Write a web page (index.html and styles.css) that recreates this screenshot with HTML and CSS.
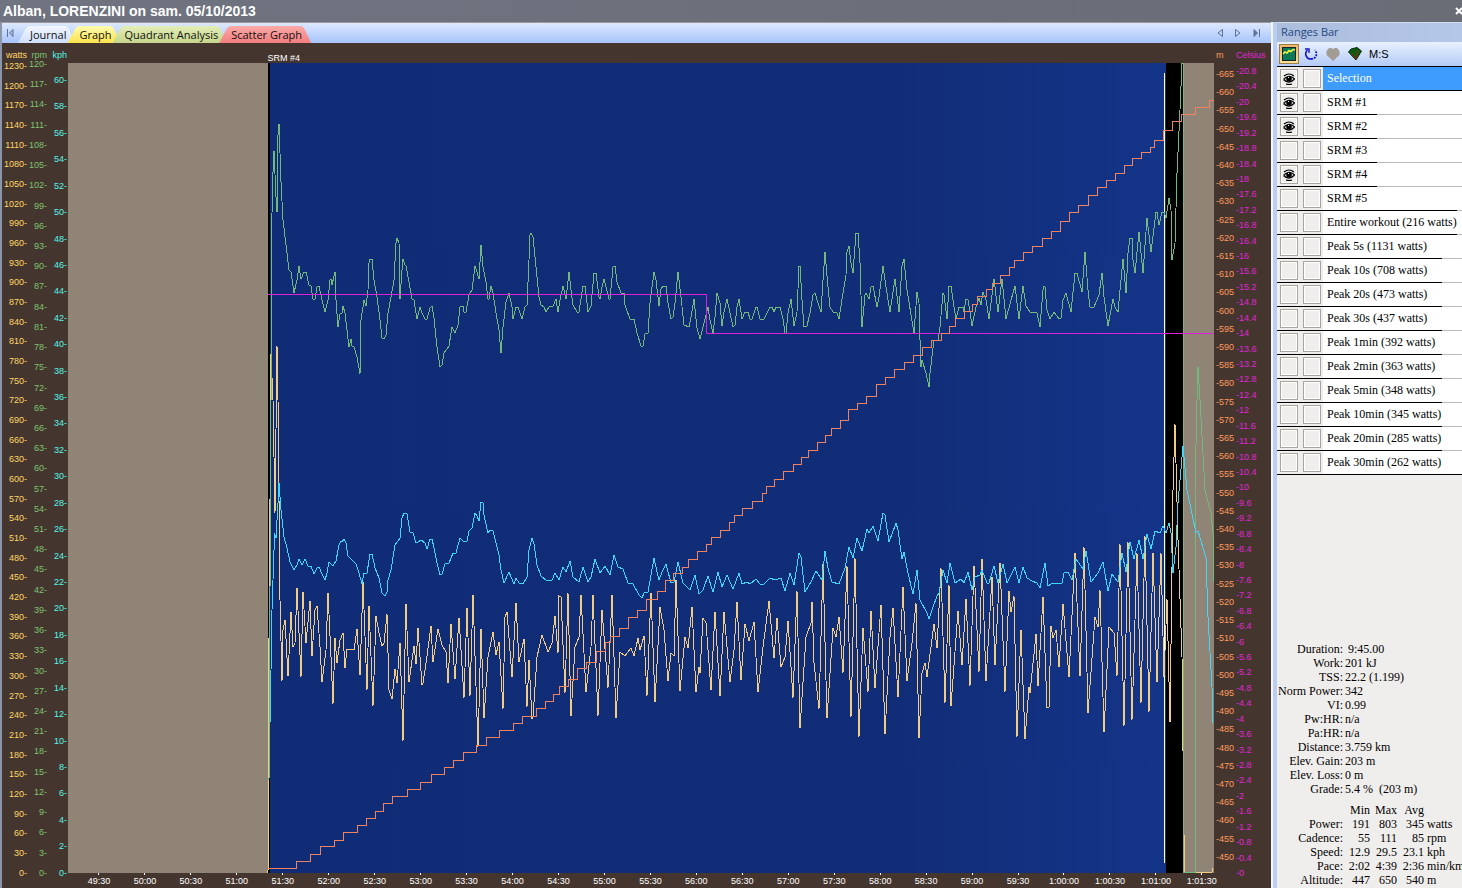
FILE: index.html
```html
<!DOCTYPE html>
<html lang="en">
<head>
    <meta charset="UTF-8">
    <title>Workout Graph</title>
    <link rel="stylesheet" href="styles.css">
</head>
<body>
    <!-- Title Bar -->
    <header class="titlebar">
        <h1>Alban, LORENZINI on sam. 05/10/2013</h1>
        <button class="close" aria-label="Close">
            <svg width="7" height="8" viewBox="0 0 7 8"><path d="M1 1L7 7M7 1L1 7" stroke="#fff" stroke-width="2"/></svg>
        </button>
    </header>
    <div class="workspace">
        <main class="main">
            <!-- Tabs -->
            <nav class="tabs">
                <button class="arrow" aria-label="First tab">
                    <svg width="8" height="8" viewBox="0 0 8 8"><path d="M1.5 0V8M7 0.5V7.5L3.5 4Z" fill="#a9b9d8" stroke="#5c7299"/></svg>
                </button>
                <button class="tab journal">Journal</button>
                <button class="tab graph">Graph</button>
                <button class="tab quadrant">Quadrant Analysis</button>
                <button class="tab scatter">Scatter Graph</button>
                <div class="tab-arrows">
                    <button class="arrow" aria-label="Previous tab">
                        <svg width="6" height="8" viewBox="0 0 6 8"><path d="M5.5 0.5V7.5L1 4Z" fill="none" stroke="#5c7299"/></svg>
                    </button>
                    <button class="arrow" aria-label="Next tab">
                        <svg width="6" height="8" viewBox="0 0 6 8"><path d="M0.5 0.5V7.5L5 4Z" fill="none" stroke="#5c7299"/></svg>
                    </button>
                    <button class="arrow" aria-label="Last tab">
                        <svg width="8" height="8" viewBox="0 0 8 8"><path d="M6.5 0V8M1 0.5V7.5L4.5 4Z" fill="#5c7299" stroke="#5c7299"/></svg>
                    </button>
                </div>
            </nav>
            <!-- Graph -->
            <section class="chart">
                <div class="units left">
                    <span class="watts">watts</span>
                    <span class="rpm">rpm</span>
                    <span class="kph">kph</span>
                </div>
                <div class="range-name">SRM #4</div>
                <div class="units right">
                    <span class="meters">m</span>
                    <span class="celsius">Celsius</span>
                </div>
                <div class="axes left">
                    <div class="axis watts" id="wattsAxis"></div>
                    <div class="axis rpm" id="rpmAxis"></div>
                    <div class="axis kph" id="kphAxis"></div>
                </div>
                <svg class="plot" viewBox="68 63 1146 810" preserveAspectRatio="none">
                    <defs>
                        <linearGradient id="selected">
                            <stop offset="0" stop-color="#112c77"/>
                            <stop offset="0.7" stop-color="#112d78"/>
                            <stop offset="1" stop-color="#143488"/>
                        </linearGradient>
                    </defs>
                    <rect x="68" y="63" width="1146" height="810" fill="#908477"/>
                    <rect x="268" y="63" width="916" height="810" fill="#000"/>
                    <rect x="270" y="63" width="896" height="810" fill="url(#selected)"/>
                    <rect x="1164" y="73" width="1" height="790" fill="#fff"/>
                    <!-- Power -->
                    <polyline class="line power" points="268,873 269,640 270,500 271,354 273,400 275,513 277,346 278,400 280,600 282,681 283,630 285,620 288,676 291,612 293,647 295,643 297,588 301,677 303,592 306,643 310,601 312,656 315,610 317,606 320,647 322,682 326,650 328,593 331,657 333,704 335,638 337,663 340,640 343,633 345,668 347,649 354,650 357,629 360,675 363,582 367,690 369,606 373,706 376,616 379,633 382,646 384,643 387,614 389,690 392,699 395,669 397,683 400,643 403,741 406,604 409,682 414,646 416,664 418,628 422,685 423,683 426,663 431,626 433,662 438,629 442,645 446,652 448,683 451,624 455,679 459,618 464,698 467,608 470,696 473,595 478,747 481,629 484,718 488,657 493,632 496,655 499,642 503,709 505,617 507,612 512,677 516,603 519,662 524,639 527,707 529,660 532,719 533,717 537,657 542,635 548,652 552,643 555,616 558,653 559,596 561,597 565,693 568,593 571,716 575,647 579,637 581,595 586,692 591,647 593,595 598,716 602,610 608,688 612,595 616,718 620,652 625,656 631,648 634,656 638,638 640,650 644,636 647,696 651,593 655,702 660,607 664,630 668,681 671,653 674,656 676,580 680,691 685,637 688,648 692,607 696,692 699,667 700,673 703,618 706,623 711,690 715,612 720,696 724,612 730,682 734,650 737,602 741,680 745,624 749,641 754,622 758,692 763,647 769,601 774,658 777,618 781,667 785,657 788,621 793,698 797,591 800,728 806,637 811,623 812,602 814,663 819,709 823,564 827,718 833,628 836,637 839,617 843,673 847,566 851,717 855,558 859,737 863,628 868,692 871,611 875,688 881,605 885,734 890,637 893,608 898,697 903,587 907,681 912,643 916,603 919,738 922,673 925,663 927,677 934,624 937,648 941,568 945,703 949,585 951,706 958,611 962,665 966,599 970,686 974,566 979,672 982,559 986,681 992,577 995,665 1000,563 1005,692 1009,591 1011,612 1014,596 1017,737 1021,630 1025,739 1029,687 1030,693 1036,634 1038,686 1043,597 1047,708 1049,707 1051,626 1053,638 1056,630 1059,667 1063,604 1069,677 1075,553 1080,676 1084,547 1088,713 1095,617 1098,627 1100,590 1104,732 1109,627 1114,633 1117,676 1120,544 1124,726 1128,542 1132,720 1137,553 1141,703 1145,536 1149,712 1153,553 1157,682 1161,553 1164,677 1167,599 1170,722 1173,490 1175,424 1178,540 1182,657 1183,751 1184,835 1184,872 1212,872 1213,868"/>
                    <!-- Cadence -->
                    <polyline class="line cadence" points="269,780 271,400 271,263 272,213 273,172 274,151 276,197 277,212 277,147 279,124 281,182 283,220 289,270 291,272 294,293 297,280 299,266 301,279 304,272 306,272 309,285 311,286 313,299 315,299 317,287 319,286 322,300 325,312 328,300 330,280 331,279 332,285 335,272 336,300 338,327 340,314 342,313 343,306 345,313 347,330 349,347 351,339 352,346 354,347 357,357 360,374 361,320 364,300 366,306 368,290 369,263 370,259 372,259 374,280 377,297 380,320 382,338 384,339 386,335 388,313 391,297 394,280 396,243 397,238 399,243 400,299 402,270 403,259 405,265 406,266 409,282 412,299 414,300 416,313 417,319 420,307 422,313 425,319 427,319 430,308 432,306 434,318 437,347 440,367 442,365 444,353 449,346 452,327 455,333 458,325 460,307 463,306 464,312 466,312 469,295 472,290 475,266 477,272 479,279 481,245 483,267 486,282 488,299 489,299 491,286 493,293 496,313 499,330 501,353 503,327 506,302 509,293 512,307 513,319 516,307 518,307 522,319 525,307 527,305 529,260 530,235 531,233 533,237 536,267 539,297 541,305 544,307 546,312 549,307 553,306 556,299 558,312 560,300 563,286 566,299 569,272 571,290 573,305 577,312 579,312 583,286 585,286 588,312 591,306 594,273 596,273 599,297 600,299 602,287 604,279 609,299 610,299 613,267 615,266 617,282 621,293 624,293 625,305 630,319 634,319 637,333 641,346 643,346 645,334 648,333 650,303 654,272 656,280 659,306 661,289 663,286 666,286 668,303 671,319 673,317 675,303 678,272 681,297 684,325 689,327 691,317 694,299 697,328 700,339 703,327 708,307 710,320 713,333 715,317 717,293 720,303 722,326 724,312 727,299 730,313 733,327 735,325 737,307 739,299 742,319 745,312 748,312 750,319 752,319 756,307 757,307 760,319 764,319 770,307 772,307 774,312 776,307 780,307 783,319 785,333 786,333 788,313 791,299 794,326 797,312 799,266 800,266 802,300 804,327 807,326 810,313 813,295 815,293 818,303 821,312 823,280 825,252 828,287 830,307 833,312 837,313 839,319 842,299 846,275 847,252 849,246 851,263 853,273 856,233 858,233 860,263 862,327 865,295 866,293 869,299 871,287 873,286 877,307 879,297 883,266 886,287 890,312 895,279 899,312 902,266 904,259 907,290 914,333 917,292 919,303 920,340 921,367 922,360 926,373 929,387 930,373 934,340 938,340 940,327 943,293 944,295 947,319 949,286 951,286 954,307 956,319 959,307 963,307 964,312 966,299 968,300 970,312 972,326 976,307 979,298 981,305 983,292 986,300 989,319 994,279 998,312 1002,279 1006,319 1011,300 1015,286 1019,319 1023,286 1026,306 1030,312 1037,313 1040,327 1043,290 1044,286 1045,287 1047,310 1050,319 1054,312 1059,319 1061,318 1063,300 1066,293 1071,312 1075,273 1077,273 1082,292 1085,252 1088,290 1090,307 1094,307 1099,295 1102,273 1104,297 1108,326 1113,299 1115,307 1118,312 1120,290 1123,259 1126,293 1128,253 1130,238 1132,238 1133,260 1135,273 1139,232 1143,273 1147,218 1151,252 1156,212 1157,212 1159,225 1162,212 1164,212 1166,218 1169,198 1171,210 1172,260 1175,243 1177,173 1180,110 1182,63 1183,63 1183,872 1195,872 1195,490 1197,400 1198,367 1200,400 1205,490 1208,502 1211,513 1213,533 1213,582"/>
                    <!-- Speed -->
                    <polyline class="line speed" points="270,723 271,670 272,610 274,550 274,533 276,538 278,503 279,483 281,510 284,537 287,548 290,562 294,570 297,565 299,559 302,565 305,559 308,566 311,566 314,574 317,568 319,567 322,574 325,580 327,573 329,562 333,566 336,561 339,545 341,541 342,542 344,539 346,543 348,556 352,560 356,564 359,573 362,584 364,573 367,573 370,554 372,554 375,568 379,578 382,593 385,596 387,592 388,580 391,570 395,545 400,538 402,518 404,513 407,514 410,532 413,533 416,543 418,542 421,540 425,543 427,549 430,539 432,539 434,548 437,563 440,575 442,574 445,564 449,563 453,553 456,553 460,538 464,542 467,541 469,531 472,528 475,513 477,516 479,521 481,502 483,503 484,515 488,533 490,530 493,531 495,539 499,555 501,570 504,583 509,572 514,584 516,578 519,583 523,584 527,577 529,550 532,538 534,544 537,565 541,576 547,581 552,580 555,573 559,580 563,567 566,572 570,561 573,577 579,582 583,567 588,582 591,577 595,559 600,573 605,566 610,575 614,555 618,567 623,569 628,583 633,584 639,595 642,598 644,593 648,592 654,558 657,572 659,580 662,572 666,564 671,583 674,582 678,562 683,583 690,590 695,575 699,594 703,590 708,576 713,592 718,572 722,587 727,575 733,589 739,573 742,584 747,582 750,584 756,579 760,584 764,584 770,578 775,580 781,578 785,591 790,573 794,585 799,553 801,557 805,592 811,582 816,571 822,580 825,551 828,568 832,582 839,584 845,568 849,547 853,558 857,538 862,551 867,529 869,533 873,526 878,541 883,513 885,515 889,542 896,523 898,530 902,559 904,552 908,573 913,594 917,570 920,600 927,613 929,619 933,607 937,596 939,593 943,570 947,583 950,563 955,583 961,579 964,583 968,572 972,590 975,577 980,575 982,570 987,583 989,583 994,566 998,583 1003,564 1007,583 1015,567 1019,583 1023,567 1027,578 1032,581 1037,583 1040,588 1045,563 1048,586 1053,583 1062,583 1064,573 1068,572 1072,580 1076,559 1083,569 1086,551 1091,582 1098,573 1103,562 1108,591 1112,574 1118,582 1122,553 1126,572 1130,542 1134,559 1139,540 1143,559 1147,534 1151,549 1155,531 1160,533 1163,526 1166,533 1169,523 1171,533 1173,573 1176,547 1178,503 1183,446 1187,490 1196,533 1198,531 1206,558 1208,617 1212,687 1213,723"/>
                    <!-- Temperature -->
                    <path class="temperature" d="M268 294.5H706.5V333.5H1214"/>
                    <!-- Altitude -->
                    <path class="line altitude" d="M268 868H296V861H310V854H320V846H334V840H343V832H357V825H366V818H375V811H383V803H392V796H407V789H420V782H431V774H444V767H453V760H463V752H476V745H486V737H499V730H513V723H522V716H536V708H545V701H553V694H559V686H568V679H577V668H586V662H596V651H605V642H610V636H619V628H628V617H637V610H646V599H657V591H665V580H673V573H682V567H688V559H697V551H706V544H711V537H720V530H729V522H734V515H742V508H752V501H762V493H766V486H774V479H783V471H793V464H801V457H808V450H817V442H825V435H831V428H840V420H848V409H857V403H866V396H876V384H885V377H894V369H904V362H913V355H922V347H931V340H941V333H949V326H955V318H964V311H972V304H977V296H986V289H992V283H1000V275H1009V267H1014V260H1023V252H1032V246H1042V238H1051V231H1060V221H1069V212H1078V205H1088V195H1097V187H1106V180H1115V173H1124V165H1132V158H1141V152H1150V147H1154V140H1163V130H1172V121H1181V114H1195V107H1209V100H1214"/>
                </svg>
                <div class="axes right">
                    <div class="axis meters" id="metersAxis"></div>
                    <div class="axis celsius" id="celsiusAxis"></div>
                </div>
                <div class="time-axis" id="timeAxis"></div>
            </section>
        </main>
        <!-- Ranges Bar -->
        <aside class="ranges">
            <h2>Ranges Bar</h2>
            <div class="toolbar">
                <button class="tool active" aria-label="Graph">
                    <svg width="14" height="14" viewBox="0 0 14 14"><rect x="0.5" y="0.5" width="13" height="13" fill="#0b7a55" stroke="#123"/><path d="M1 7L3 5L5 6L7 3.5L9 4.5L11 2.5L13 3" fill="none" stroke="#f4f43a" stroke-width="1.5"/></svg>
                </button>
                <button class="tool" aria-label="Refresh">
                    <svg width="14" height="14" viewBox="0 0 14 14" fill="none" stroke="#1616c8"><path d="M3.5 3C0 6 2 12 7 12" stroke-width="1.6"/><path d="M7 12C12 12 14 7 11 3" stroke-width="1.8" stroke-dasharray="2 1"/><path d="M1 2H5V6" stroke-width="1.4"/></svg>
                </button>
                <button class="tool" aria-label="Heart rate">
                    <svg width="14" height="14" viewBox="0 0 14 14"><path d="M3 1H5L7 2L9 1H11L13.5 4V8L7 14L0.5 8V4Z" fill="#a39c95"/></svg>
                </button>
                <button class="tool" aria-label="Peaks">
                    <svg width="14" height="14" viewBox="0 0 14 14"><path d="M3 2L9 0.5L13.5 4L8 13L0.5 5Z" fill="#0b5c12" stroke="#092c09"/><path d="M10 3L8 12L4 6" fill="none" stroke="#8b2810"/></svg>
                </button>
                <button class="tool time">M:S</button>
            </div>
            <ul class="range-list" id="rangeList"></ul>
            <!-- Selection Statistics -->
            <div class="stats">
                <table class="summary">
                    <tr><th>Duration:</th><td>&nbsp;9:45.00</td></tr>
                    <tr><th>Work:</th><td>201 kJ</td></tr>
                    <tr><th>TSS:</th><td>22.2 (1.199)</td></tr>
                    <tr><th>Norm Power:</th><td>342</td></tr>
                    <tr><th>VI:</th><td>0.99</td></tr>
                    <tr><th>Pw:HR:</th><td>n/a</td></tr>
                    <tr><th>Pa:HR:</th><td>n/a</td></tr>
                    <tr><th>Distance:</th><td>3.759 km</td></tr>
                    <tr><th>Elev. Gain:</th><td>203 m</td></tr>
                    <tr><th>Elev. Loss:</th><td>0 m</td></tr>
                    <tr><th>Grade:</th><td>5.4 %&nbsp; (203 m)</td></tr>
                </table>
                <table class="averages">
                    <tr><th></th><th>Min</th><th>Max</th><th>Avg</th><td></td></tr>
                    <tr><th>Power:</th><td>191</td><td>803</td><td>345</td><td>watts</td></tr>
                    <tr><th>Cadence:</th><td>55</td><td>111</td><td>85</td><td>rpm</td></tr>
                    <tr><th>Speed:</th><td>12.9</td><td>29.5</td><td>23.1</td><td>kph</td></tr>
                    <tr><th>Pace:</th><td>2:02</td><td>4:39</td><td>2:36</td><td>min/km</td></tr>
                    <tr><th>Altitude:</th><td>447</td><td>650</td><td>540</td><td>m</td></tr>
                </table>
            </div>
        </aside>
    </div>
    <script src="script.js"></script>
</body>
</html>
```
FILE: styles.css
```css
* {
    box-sizing: border-box;
}
body {
    margin: 0;
    height: 100vh;
    display: flex;
    flex-direction: column;
    overflow: hidden;
    font-family: "Liberation Sans", Arial, sans-serif;
}
button {
    border: 0;
    padding: 0;
    background: none;
    font: inherit;
    color: inherit;
}
svg {
    display: block;
}

/* Title bar */
.titlebar {
    display: flex;
    justify-content: space-between;
    align-items: center;
    height: 22px;
    padding-left: 3px;
    background: linear-gradient(to right, #6f7480, #6a6c76);
    color: #fff;
}
.titlebar h1 {
    margin: 0;
    font-size: 14px;
    line-height: 20px;
}
.workspace {
    flex: 1;
    display: flex;
    min-height: 0;
}
.main {
    flex: 1;
    min-width: 0;
    display: flex;
    flex-direction: column;
    border-left: 2px solid #8b96ab;
}

/* Tabs */
.tabs {
    display: flex;
    align-items: flex-end;
    height: 21px;
    padding-left: 4px;
    border-top: 1px solid #9c9a9c;
    background: linear-gradient(#dce8ff, #a8c4fb);
    font-family: "Open Sans", "Noto Sans", sans-serif;
    font-size: 11px;
}
.tab {
    height: 17px;
    line-height: 16px;
    padding: 0 9px 0 12px;
    margin-left: -8px;
    clip-path: polygon(0 100%, 8px 2px, 11px 0, calc(100% - 10px) 0, calc(100% - 7px) 2px, 100% 100%);
    color: #111;
}
.journal {
    margin-left: 4px;
    background: linear-gradient(#f2f7ff, #cfdffc);
}
.graph {
    background: linear-gradient(#fffbb0, #fbe24c);
}
.quadrant {
    background: linear-gradient(#e3eeb6, #c6d68c);
}
.scatter {
    background: linear-gradient(#fbaaa8, #f27f7f);
}
.arrow {
    align-self: center;
}
.tab-arrows {
    display: flex;
    gap: 12px;
    margin-left: auto;
    align-self: center;
    padding-right: 10px;
}

/* Graph */
.chart {
    flex: 1;
    min-height: 0;
    display: grid;
    grid-template-columns: 66px 1fr 57px;
    grid-template-rows: 20px 1fr 15px;
    background: #44362e;
    font-size: 9px;
    line-height: 10px;
}
.units, .axes {
    display: grid;
}
.left {
    grid-template-columns: 25px 20px 20px;
    text-align: right;
}
.right {
    grid-template-columns: 20px 1fr;
    padding-left: 2px;
}
.units {
    padding-top: 7px;
}
.units span {
    white-space: nowrap;
}
.axis {
    display: flex;
    flex-direction: column;
    justify-content: space-between;
}
.axes .watts {
    margin: -2px 0 -5px;
}
.axes .rpm {
    margin: -4px 0 -5px;
}
.axes .kph {
    margin: 12px 0 -5px;
}
.axes .meters {
    margin: 6px 0 11px;
}
.axes .celsius {
    margin: 3px 0 -5px;
}
.watts { color: #ffd566; }
.rpm { color: #7fc270; }
.kph { color: #55f5ea; }
.meters { color: #ff9a5e; }
.celsius { color: #e024d8; }
.range-name {
    padding-top: 10px;
    margin-left: 17.4%;
    color: #fff;
}
.plot {
    width: 100%;
    height: 100%;
    min-height: 0;
}
.line {
    fill: none;
    stroke-width: 1px;
    vector-effect: non-scaling-stroke;
    shape-rendering: crispEdges;
}
.power { stroke: #f0cd80; }
.cadence { stroke: #74b97c; }
.speed { stroke: #3fd8f8; }
.temperature { fill: none; stroke: #dc22dc; }
.altitude { stroke: #f0825f; }
.time-axis {
    grid-column: 2;
    display: flex;
    margin: 0 -11px 0 8px;
    color: #fff;
}
.time-axis span {
    flex: 1 1 0;
    min-width: 0;
    padding-top: 3px;
    text-align: center;
    background: linear-gradient(#fff, #fff) center top / 1px 2px no-repeat;
}

/* Ranges bar */
.ranges {
    flex: 0 0 191px;
    display: flex;
    flex-direction: column;
    overflow: hidden;
    border-left: 2px solid #f4f6fa;
    box-shadow: inset 4px 0 #bccdf2;
    padding-left: 4px;
    background: #f0eeec;
    font-family: "Liberation Serif", "Times New Roman", serif;
    font-size: 12px;
}
.ranges h2 {
    margin: 0;
    height: 20px;
    padding-left: 4px;
    border-top: 1px solid #d5dcea;
    background: linear-gradient(to right, #acbddd, #b5c7e9);
    color: #27497f;
    font: 11px/18px "Open Sans", "Noto Sans", sans-serif;
}
.toolbar {
    display: flex;
    align-items: center;
    gap: 2px;
    height: 24px;
    padding-left: 2px;
    background: linear-gradient(#e9f1ff, #b4cbf7);
}
.tool {
    display: flex;
    align-items: center;
    justify-content: center;
    width: 20px;
    height: 20px;
    font-family: "Liberation Sans", Arial, sans-serif;
    font-size: 11px;
}
.tool.active {
    border: 1px solid #9b7c4b;
    background: linear-gradient(#f3b562, #fcdf92);
}
.tool.time {
    width: auto;
    padding-left: 2px;
}
.range-list {
    list-style: none;
    margin: 0;
    padding: 0;
    border-top: 1px solid #000;
}
/* separator: black part over a grey line */
.range-list li {
    display: flex;
    height: 24px;
    padding-bottom: 1px;
    background: linear-gradient(#000, #000) left bottom / 100px 1px no-repeat,
        linear-gradient(#bdbab6, #bdbab6) left bottom / 100% 1px no-repeat;
}
.range-list .wide {
    background-size: 165px 1px, 100% 1px;
}
.range-list .wider {
    background-size: 180px 1px, 100% 1px;
}
.range-list .full {
    background-size: 100% 1px;
}
.box {
    display: flex;
    align-items: center;
    justify-content: center;
    width: 18px;
    height: 19px;
    margin: 2px 2px 0 3px;
    border: 1px solid #a8a49f;
    box-shadow: inset -1px -1px #fff, inset 1px 1px #fff;
    background: #f0eeec;
}
.range-list label {
    flex: 1;
    padding-left: 4px;
    background: #fff;
    line-height: 22px;
    white-space: nowrap;
}
.range-list .selected label {
    background: #3e9bff;
    color: #fff;
}

/* Statistics */
.stats {
    margin-top: auto;
    padding-bottom: 1px;
    line-height: 14px;
}
.stats table {
    border-collapse: collapse;
    table-layout: fixed;
    width: 185px;
}
.stats th, .stats td {
    padding: 0;
    height: 14px;
    font-weight: normal;
    white-space: nowrap;
}
.stats th {
    text-align: right;
}
.stats th:first-child {
    width: 66px;
}
.summary td {
    padding-left: 2px;
}
.averages {
    margin-top: 7px;
}
.averages th, .averages td {
    width: 27px;
    text-align: right;
}
.averages td:last-child {
    width: auto;
    padding-left: 3px;
    text-align: left;
}
```
FILE: script.js
```js
const eye = '<svg width="12" height="12" viewBox="0 0 12 12"><path d="M1 3Q6 -1 11 3M0.5 6.5Q6 0.5 11.5 6Q6 12 0.5 6.5M3 11Q6 12 9 11" fill="none" stroke="#000" stroke-width="1.2"/><circle cx="6" cy="6" r="2.8"/><rect x="5" y="4" width="1" height="1" fill="#fff"/></svg>';

const ranges = [
    { name: "Selection", visible: true, line: "full selected" },
    { name: "SRM #1", visible: true },
    { name: "SRM #2", visible: true },
    { name: "SRM #3" },
    { name: "SRM #4", visible: true },
    { name: "SRM #5", line: "wider" },
    { name: "Entire workout (216 watts)", line: "wider" },
    { name: "Peak 5s (1131 watts)", line: "wide" },
    { name: "Peak 10s (708 watts)", line: "wide" },
    { name: "Peak 20s (473 watts)", line: "wide" },
    { name: "Peak 30s (437 watts)", line: "wide" },
    { name: "Peak 1min (392 watts)", line: "wide" },
    { name: "Peak 2min (363 watts)", line: "wide" },
    { name: "Peak 5min (348 watts)", line: "wide" },
    { name: "Peak 10min (345 watts)", line: "wide" },
    { name: "Peak 20min (285 watts)", line: "wide" },
    { name: "Peak 30min (262 watts)", line: "full" }
];

function fillAxis(id, top, bottom, step, format) {
    const axis = document.getElementById(id);
    const count = Math.round((top - bottom) / step);
    for (let i = 0; i <= count; i++) {
        const label = document.createElement("span");
        // one decimal at most, without trailing zeros
        label.textContent = format(Math.round((top - i * step) * 10) / 10);
        axis.appendChild(label);
    }
}

function formatTime(seconds) {
    const h = Math.floor(seconds / 3600);
    const m = Math.floor(seconds % 3600 / 60);
    const s = String(seconds % 60).padStart(2, "0");
    return h ? h + ":" + String(m).padStart(2, "0") + ":" + s : m + ":" + s;
}

function fillRanges() {
    const list = document.getElementById("rangeList");
    ranges.forEach(function(range, i) {
        const row = document.createElement("li");
        row.className = range.line || "";
        row.innerHTML = '<button class="box" id="show' + i + '">' + (range.visible ? eye : "") + '</button>' +
            '<button class="box" aria-label="Shade range"></button>' +
            '<label for="show' + i + '">' + range.name + '</label>';
        list.appendChild(row);
    });
}

fillAxis("wattsAxis", 1230, 0, 30, v => v + "-");
fillAxis("rpmAxis", 120, 0, 3, v => v + "-");
fillAxis("kphAxis", 60, 0, 2, v => v + "-");
fillAxis("metersAxis", 665, 450, 5, v => "-" + v);
fillAxis("celsiusAxis", 20.8, 0, 0.4, v => "-" + v);

const timeAxis = document.getElementById("timeAxis");
for (let t = 49 * 60 + 30; t <= 3690; t += 30) {
    const label = document.createElement("span");
    label.textContent = formatTime(t);
    timeAxis.appendChild(label);
}

fillRanges();
```
